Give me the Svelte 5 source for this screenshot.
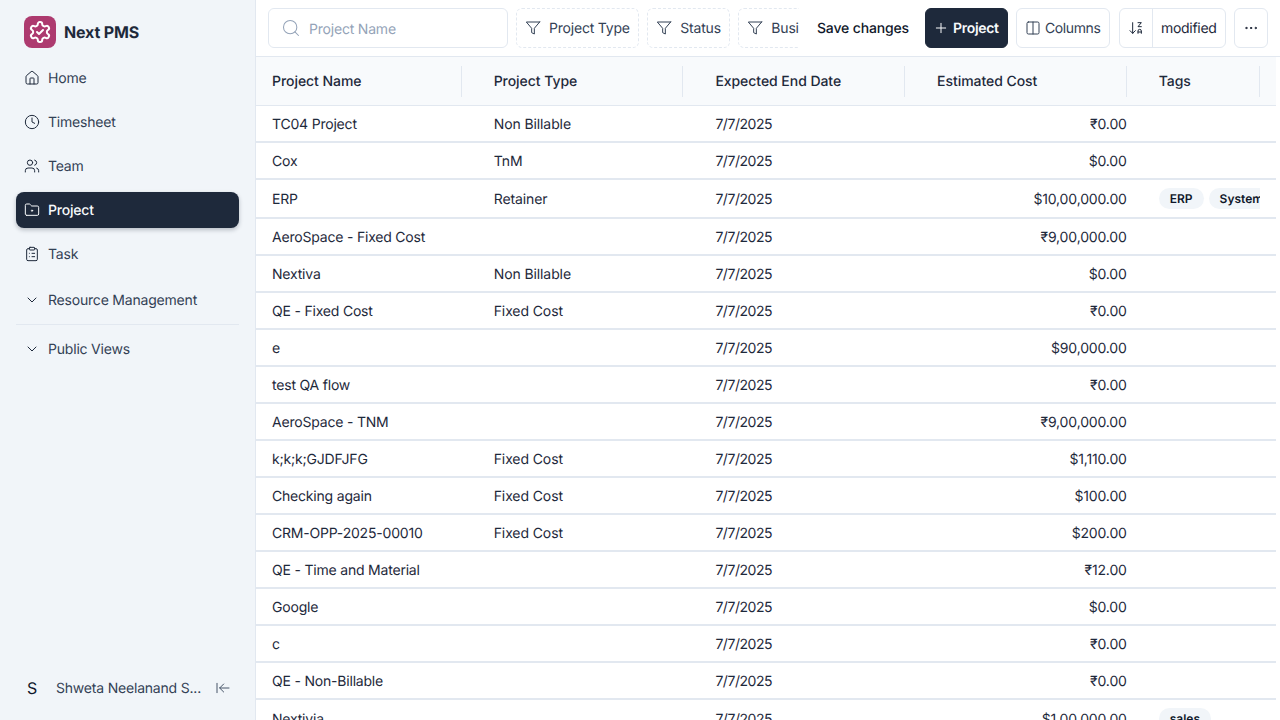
<script>
  const columns = ['Project Name', 'Project Type', 'Expected End Date', 'Estimated Cost', 'Tags'];
  const rows = [
    ['TC04 Project', 'Non Billable', '₹0.00'],
    ['Cox', 'TnM', '$0.00'],
    ['ERP', 'Retainer', '$10,00,000.00', ['ERP', 'System']],
    ['AeroSpace - Fixed Cost', '', '₹9,00,000.00'],
    ['Nextiva', 'Non Billable', '$0.00'],
    ['QE - Fixed Cost', 'Fixed Cost', '₹0.00'],
    ['e', '', '$90,000.00'],
    ['test QA flow', '', '₹0.00'],
    ['AeroSpace - TNM', '', '₹9,00,000.00'],
    ['k;k;k;GJDFJFG', 'Fixed Cost', '$1,110.00'],
    ['Checking again', 'Fixed Cost', '$100.00'],
    ['CRM-OPP-2025-00010', 'Fixed Cost', '$200.00'],
    ['QE - Time and Material', '', '₹12.00'],
    ['Google', '', '$0.00'],
    ['c', '', '₹0.00'],
    ['QE - Non-Billable', '', '₹0.00'],
    ['Nextivia', '', '$1,00,000.00', ['sales']]
  ];
  const filters = ['Project Type', 'Status', 'Business Unit'];
</script>

{#snippet filterIcon()}
  <svg class="ic" viewBox="0 0 24 24"><polygon points="22 3 2 3 10 12.46 10 19 14 21 14 12.46 22 3" /></svg>
{/snippet}
{#snippet chevron()}
  <svg class="ic chev" viewBox="0 0 24 24"><path d="m6 9 6 6 6-6" /></svg>
{/snippet}

<div class="app">
  <aside class="sidebar">
    <div class="brand">
      <div class="logo">
        <svg viewBox="0 0 24 24">
          <path d="M12.22 2h-.44a2 2 0 0 0-2 2v.18a2 2 0 0 1-1 1.73l-.43.25a2 2 0 0 1-2 0l-.15-.08a2 2 0 0 0-2.73.73l-.22.38a2 2 0 0 0 .73 2.73l.15.1a2 2 0 0 1 1 1.72v.51a2 2 0 0 1-1 1.74l-.15.09a2 2 0 0 0-.73 2.73l.22.38a2 2 0 0 0 2.73.73l.15-.08a2 2 0 0 1 2 0l.43.25a2 2 0 0 1 1 1.73V20a2 2 0 0 0 2 2h.44a2 2 0 0 0 2-2v-.18a2 2 0 0 1 1-1.73l.43-.25a2 2 0 0 1 2 0l.15.08a2 2 0 0 0 2.73-.73l.22-.39a2 2 0 0 0-.73-2.73l-.15-.08a2 2 0 0 1-1-1.74v-.5a2 2 0 0 1 1-1.74l.15-.09a2 2 0 0 0 .73-2.73l-.22-.38a2 2 0 0 0-2.73-.73l-.15.08a2 2 0 0 1-2 0l-.43-.25a2 2 0 0 1-1-1.73V4a2 2 0 0 0-2-2z" />
          <path d="m9 12 2 2 4-4" />
        </svg>
      </div>
      <span class="brand-name">Next PMS</span>
    </div>
    <nav class="nav">
      <div class="nav-item">
        <svg class="ic" viewBox="0 0 24 24"><path d="M15 21v-8a1 1 0 0 0-1-1h-4a1 1 0 0 0-1 1v8" /><path d="M3 10a2 2 0 0 1 .709-1.528l7-5.999a2 2 0 0 1 2.582 0l7 5.999A2 2 0 0 1 21 10v9a2 2 0 0 1-2 2H5a2 2 0 0 1-2-2z" /></svg>
        <span>Home</span>
      </div>
      <div class="nav-item">
        <svg class="ic" viewBox="0 0 24 24"><circle cx="12" cy="12" r="10" /><polyline points="12 6 12 12 16 14" /></svg>
        <span>Timesheet</span>
      </div>
      <div class="nav-item">
        <svg class="ic" viewBox="0 0 24 24"><path d="M16 21v-2a4 4 0 0 0-4-4H6a4 4 0 0 0-4 4v2" /><circle cx="9" cy="7" r="4" /><path d="M22 21v-2a4 4 0 0 0-3-3.87" /><path d="M16 3.13a4 4 0 0 1 0 7.75" /></svg>
        <span>Team</span>
      </div>
      <div class="nav-item active">
        <svg class="ic" viewBox="0 0 24 24"><path d="M4 20h16a2 2 0 0 0 2-2V8a2 2 0 0 0-2-2h-7.93a2 2 0 0 1-1.66-.9l-.82-1.2A2 2 0 0 0 7.93 3H4a2 2 0 0 0-2 2v13c0 1.1.9 2 2 2Z" /><circle cx="12" cy="13" r="1" /></svg>
        <span>Project</span>
      </div>
      <div class="nav-item">
        <svg class="ic" viewBox="0 0 24 24"><rect x="8" y="2" width="8" height="4" rx="1" /><path d="M16 4h2a2 2 0 0 1 2 2v14a2 2 0 0 1-2 2H6a2 2 0 0 1-2-2V6a2 2 0 0 1 2-2h2" /><path d="M12 11h4" /><path d="M12 16h4" /><path d="M8 11h.01" /><path d="M8 16h.01" /></svg>
        <span>Task</span>
      </div>
    </nav>
    <div class="group first">{@render chevron()} Resource Management</div>
    <div class="divider"></div>
    <div class="group">{@render chevron()} Public Views</div>
    <div class="user">
      <span class="avatar">S</span>
      <span class="user-name">Shweta Neelanand S...</span>
      <svg class="ic collapse" viewBox="0 0 24 24"><path d="M3 19V5" /><path d="m13 6-6 6 6 6" /><path d="M7 12h14" /></svg>
    </div>
  </aside>

  <main class="main">
    <header class="toolbar">
      <div class="left">
        <div class="search">
          <svg class="ic search-ic" viewBox="0 0 24 24"><circle cx="11" cy="11" r="8" /><path d="m21 21-4.3-4.3" /></svg>
          <span class="placeholder">Project Name</span>
        </div>
        {#each filters as f}
          <div class="filter">{@render filterIcon()} {f}</div>
        {/each}
      </div>
      <div class="save">Save changes</div>
      <div class="btn primary"><svg class="ic" viewBox="0 0 24 24"><path d="M5 12h14" /><path d="M12 5v14" /></svg> Project</div>
      <div class="btn columns"><svg class="ic" viewBox="0 0 24 24"><rect x="3" y="3" width="18" height="18" rx="2" /><path d="M12 3v18" /></svg> Columns</div>
      <div class="sort">
        <div class="sort-ic"><svg class="ic" viewBox="0 0 24 24"><path d="m3 16 4 4 4-4" /><path d="M7 4v16" /><path d="M15 4h5l-5 6h5" /><path d="M15 20v-3.5a2.5 2.5 0 0 1 5 0V20" /><path d="M20 18h-5" /></svg></div>
        <div class="sort-label">modified</div>
      </div>
      <div class="btn more"><svg class="ic" viewBox="0 0 24 24"><circle cx="12" cy="12" r="1" /><circle cx="19" cy="12" r="1" /><circle cx="5" cy="12" r="1" /></svg></div>
    </header>

    <section class="table">
      <div class="row head">
        {#each columns as c}
          <div class="cell">{c}<span class="sep"></span></div>
        {/each}
      </div>
      {#each rows as r}
        <div class="row">
          <div class="cell name">{r[0]}</div>
          <div class="cell type">{r[1]}</div>
          <div class="cell date">7/7/2025</div>
          <div class="cell num">{r[2]}</div>
          <div class="cell tags">
            {#if r[3]}
              <div class="tag-clip">
                {#each r[3] as t}<span class="tag">{t}</span>{/each}
              </div>
            {/if}
          </div>
        </div>
      {/each}
    </section>
  </main>
</div>

<style>
  :global(body) {
    margin: 0;
    background: #fff;
  }
  .app {
    display: flex;
    width: 1280px;
    height: 720px;
    overflow: hidden;
    font-family: Inter, "Liberation Sans", sans-serif;
    font-size: 14px;
    color: #1e293b;
    text-rendering: geometricPrecision;
    letter-spacing: -0.2px;
  }
  .ic {
    width: 16px;
    height: 16px;
    flex: none;
    fill: none;
    stroke: currentColor;
    stroke-width: 1.5;
    stroke-linecap: round;
    stroke-linejoin: round;
  }
  .sidebar {
    width: 256px;
    flex: none;
    box-sizing: border-box;
    background: #f1f5f9;
    border-right: 1px solid #e2e8f0;
    padding: 16px;
    display: flex;
    flex-direction: column;
  }
  .brand {
    display: flex;
    align-items: center;
    gap: 8px;
    padding-left: 8px;
    height: 32px;
  }
  .logo {
    width: 32px;
    height: 32px;
    border-radius: 8px;
    background: #ad3a6f;
    display: flex;
    align-items: center;
    justify-content: center;
  }
  .logo svg {
    width: 24px;
    height: 24px;
    fill: none;
    stroke: #fff;
    stroke-width: 2;
    stroke-linecap: round;
    stroke-linejoin: round;
  }
  .brand-name {
    font-size: 16px;
    font-weight: 700;
    letter-spacing: -0.15px;
    color: #1e293b;
  }
  .nav {
    display: flex;
    flex-direction: column;
    gap: 8px;
    margin-top: 12px;
  }
  .nav-item {
    height: 36px;
    width: 223px;
    box-sizing: border-box;
    display: flex;
    align-items: center;
    gap: 8px;
    padding-left: 8px;
    border-radius: 8px;
    color: #334155;
  }
  .nav-item .ic {
    color: #1e293b;
  }
  .active {
    background: #1e293b;
    color: #f8fafc;
    font-weight: 500;
    box-shadow: 0 2px 4px rgba(15, 23, 42, 0.25);
  }
  .nav-item.active .ic {
    color: #f8fafc;
  }
  .group {
    width: 223px;
    height: 20px;
    display: flex;
    align-items: center;
    gap: 8px;
    padding-left: 8px;
    box-sizing: border-box;
    color: #334155;
  }
  .group.first {
    margin-top: 18px;
  }
  .chev {
    color: #1e293b;
  }
  .divider {
    width: 223px;
    height: 1px;
    background: #e2e8f0;
    margin: 14px 0;
  }
  .user {
    margin-top: auto;
    width: 216px;
    height: 32px;
    display: flex;
    align-items: center;
    color: #334155;
  }
  .avatar {
    width: 32px;
    text-align: center;
    font-size: 16px;
    color: #0f172a;
    flex: none;
  }
  .user-name {
    margin-left: 8px;
    flex: 1;
  }
  .collapse {
    color: #475569;
    margin-right: 1px;
  }
  .main {
    flex: 1;
    min-width: 0;
    display: flex;
    flex-direction: column;
  }
  .toolbar {
    height: 57px;
    box-sizing: border-box;
    flex: none;
    display: flex;
    align-items: flex-start;
    padding: 8px 12px;
    gap: 8px;
    border-bottom: 1px solid #e2e8f0;
  }
  .left {
    flex: 1;
    min-width: 0;
    display: flex;
    gap: 8px;
    overflow: hidden;
    margin-right: 2px;
  }
  .search {
    width: 240px;
    height: 40px;
    box-sizing: border-box;
    flex: none;
    border: 1px solid #e2e8f0;
    border-radius: 6px;
    display: flex;
    align-items: center;
    gap: 8px;
    padding-left: 12px;
    color: #94a3b8;
  }
  .placeholder {
    padding-top: 2px;
  }
  .search-ic {
    width: 20px;
    height: 20px;
    stroke-width: 1.25;
  }
  .filter {
    height: 40px;
    box-sizing: border-box;
    flex: none;
    border: 1px dashed #e2e8f0;
    border-radius: 6px;
    display: flex;
    align-items: center;
    gap: 8px;
    padding: 0 8.5px 0 8px;
    color: #334155;
  }
  .save {
    height: 40px;
    flex: none;
    display: flex;
    align-items: center;
    padding: 0 8px;
    font-weight: 500;
    letter-spacing: -0.15px;
    color: #0f172a;
  }
  .btn {
    height: 40px;
    box-sizing: border-box;
    flex: none;
    border: 1px solid #e2e8f0;
    border-radius: 6px;
    display: flex;
    align-items: center;
    gap: 4px;
    padding: 0 8px;
    color: #334155;
  }
  .primary {
    width: 83px;
    padding: 0 7px;
    background: #1e293b;
    border-color: #1e293b;
    color: #f8fafc;
    font-weight: 600;
    letter-spacing: -0.3px;
  }
  .columns {
    width: 94px;
    margin-right: 1px;
    letter-spacing: -0.4px;
  }
  .sort {
    height: 40px;
    width: 107px;
    box-sizing: border-box;
    flex: none;
    border: 1px solid #e2e8f0;
    border-radius: 6px;
    display: flex;
    align-items: center;
    color: #1e293b;
  }
  .sort-ic {
    width: 33px;
    height: 100%;
    box-sizing: border-box;
    border-right: 1px solid #e2e8f0;
    display: flex;
    align-items: center;
    justify-content: center;
  }
  .sort-label {
    padding-left: 8px;
    letter-spacing: -0.3px;
  }
  .more {
    width: 34px;
    padding: 0;
    justify-content: center;
    color: #0f172a;
  }
  .table {
    flex: 1;
    min-height: 0;
    overflow: hidden;
    width: 1020px;
  }
  .row {
    display: grid;
    grid-template-columns: 221.7px 221.7px 221.7px 221.7px 133px;
    height: 37px;
    box-sizing: border-box;
    border-bottom: 2px solid #e2e8f0;
    align-items: center;
  }
  .row:has(.tag) {
    height: 39px;
  }
  .head {
    height: 49px;
    background: #f8fafc;
    font-weight: 500;
    border-bottom: 1px solid #e2e8f0;
    letter-spacing: -0.05px;
  }
  .cell {
    position: relative;
    padding: 0 16px;
    white-space: nowrap;
    min-width: 0;
  }
  .name,
  .type,
  .date,
  .num {
    padding-top: 2px;
  }
  .type {
    letter-spacing: -0.1px;
  }
  .date {
    letter-spacing: -0.45px;
  }
  .sep {
    position: absolute;
    right: 16px;
    top: -7px;
    bottom: -7px;
    width: 1px;
    background: #e2e8f0;
  }
  .num {
    text-align: right;
    letter-spacing: -0.15px;
  }
  .tag-clip {
    display: flex;
    gap: 5px;
    overflow: hidden;
    width: 101px;
  }
  .tag {
    flex: none;
    height: 21px;
    display: flex;
    align-items: center;
    padding: 0 11px;
    border-radius: 11px;
    background: #f1f5f9;
    font-size: 12px;
    font-weight: 600;
    letter-spacing: 0;
    color: #0f172a;
  }
</style>
